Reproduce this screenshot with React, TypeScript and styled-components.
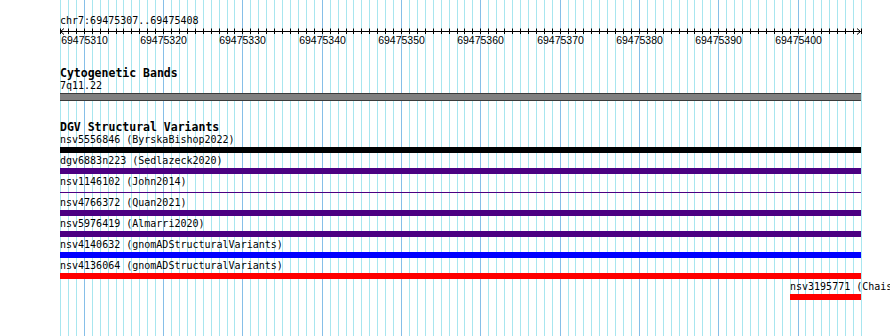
import styled, { createGlobalStyle } from "styled-components";

const START = 69475307;
const END = 69475408;
const VIEW_WIDTH = 801;
// one grid cell per base, END - START cells across the view
const BP = VIEW_WIDTH / (END - START);
const toX = (pos: number) => Math.round((pos - START) * BP);

type Variant = {
	name: string;
	source: string;
	color: string;
	start: number;
	thin?: boolean;
};

const variants: Variant[] = [
	{ name: "nsv5556846", source: "ByrskaBishop2022", color: "#000000", start: START },
	{ name: "dgv6883n223", source: "Sedlazeck2020", color: "#4b0082", start: START },
	{ name: "nsv1146102", source: "John2014", color: "#4b0082", start: START, thin: true },
	{ name: "nsv4766372", source: "Quan2021", color: "#4b0082", start: START },
	{ name: "nsv5976419", source: "Almarri2020", color: "#4b0082", start: START },
	{ name: "nsv4140632", source: "gnomADStructuralVariants", color: "#0000ff", start: START },
	{ name: "nsv4136064", source: "gnomADStructuralVariants", color: "#ff0000", start: START },
	{ name: "nsv3195771", source: "Chaisson2019", color: "#ff0000", start: 69475399 },
];

const GlobalStyle = createGlobalStyle`
	html, body {
		margin: 0;
		padding: 0;
		background: #fff;
		overflow: hidden;
	}
	body {
		font-family: "DejaVu Sans Mono", "Liberation Mono", monospace;
		color: #000;
	}
`;

function GridLines() {
	const lines = [];
	for (let pos = START; pos <= END; pos++) {
		const major = pos % 10 === 0;
		const x = toX(pos) + 0.5;
		lines.push(
			<line
				key={pos}
				x1={x}
				x2={x}
				y1={0}
				y2={336}
				stroke={major ? "#86bfe8" : "#a8e6ef"}
				strokeWidth={1}
			/>
		);
	}
	return (
		<GridSvg width={VIEW_WIDTH + 2} height={336}>
			{lines}
		</GridSvg>
	);
}

function Ruler() {
	const ticks = [];
	const labels = [];
	for (let pos = START; pos <= END; pos++) {
		const x = toX(pos) + 0.5;
		ticks.push(<line key={pos} x1={x} x2={x} y1={1.5} y2={7} stroke="#000" />);
		if (pos % 10 === 0) {
			labels.push(
				<text key={pos} x={x} y={17} textAnchor="middle">
					{pos}
				</text>
			);
		}
	}
	return (
		<RulerSvg width={VIEW_WIDTH + 2} height={21}>
			<line x1={0} x2={VIEW_WIDTH} y1={4.5} y2={4.5} stroke="#000" />
			<polyline points="4,1.5 0.5,4.5 4,7.5" fill="none" stroke="#000" />
			<polyline
				points={`${VIEW_WIDTH - 4},1.5 ${VIEW_WIDTH - 0.5},4.5 ${VIEW_WIDTH - 4},7.5`}
				fill="none"
				stroke="#000"
			/>
			{ticks}
			{labels}
		</RulerSvg>
	);
}

export default function App() {
	return (
		<>
			<GlobalStyle />
			<Page>
				<GridLines />
				<Content>
					<Location>
						chr7:{START}..{END}
					</Location>
					<Ruler />

					<Track $gap={19}>
						<TrackTitle>Cytogenetic Bands</TrackTitle>
						<FeatureLabel>7q11.22</FeatureLabel>
						<Band />
					</Track>

					<Track $gap={20}>
						<TrackTitle>DGV Structural Variants</TrackTitle>
						{variants.map((v) => (
							<FeatureRow key={v.name} $left={toX(v.start)}>
								<FeatureLabel>
									{v.name} ({v.source})
								</FeatureLabel>
								<BarSlot>
									<Bar $color={v.color} $thin={v.thin} />
								</BarSlot>
							</FeatureRow>
						))}
					</Track>
				</Content>
			</Page>
		</>
	);
}

const Page = styled.div`
	position: relative;
	width: 890px;
	height: 336px;
	padding-left: 60px;
	box-sizing: border-box;
	overflow: hidden;
`;

const GridSvg = styled.svg`
	position: absolute;
	left: 60px;
	top: 0;
	display: block;
`;

const Content = styled.div`
	position: relative;
	width: ${VIEW_WIDTH}px;
	display: flex;
	flex-direction: column;
	padding-top: 15px;
`;

const Location = styled.div`
	font-size: 10px;
	line-height: 12px;
	white-space: nowrap;
`;

const RulerSvg = styled.svg`
	display: block;
	overflow: visible;
	font-family: "Liberation Sans", Arial, sans-serif;
	font-size: 10.5px;
`;

const Track = styled.section<{ $gap: number }>`
	display: flex;
	flex-direction: column;
	margin-top: ${(p) => p.$gap}px;
`;

const TrackTitle = styled.div`
	font-size: 11.5px;
	font-weight: 700;
	line-height: 13px;
	white-space: nowrap;
`;

const FeatureLabel = styled.div`
	font-size: 10px;
	line-height: 12px;
	white-space: nowrap;
`;

const Band = styled.div`
	margin-top: 1px;
	height: 6px;
	background: #808080;
	border-top: 1px solid #3a3a3a;
	border-bottom: 1px solid #3a3a3a;
`;

const FeatureRow = styled.div<{ $left: number }>`
	display: flex;
	flex-direction: column;
	padding-left: ${(p) => p.$left}px;
	padding-bottom: 2px;
`;

const BarSlot = styled.div`
	margin-top: 1px;
	height: 6px;
	display: flex;
	align-items: center;
`;

const Bar = styled.div<{ $color: string; $thin?: boolean }>`
	flex: 1;
	height: ${(p) => (p.$thin ? "1px" : "6px")};
	background: ${(p) => p.$color};
`;
